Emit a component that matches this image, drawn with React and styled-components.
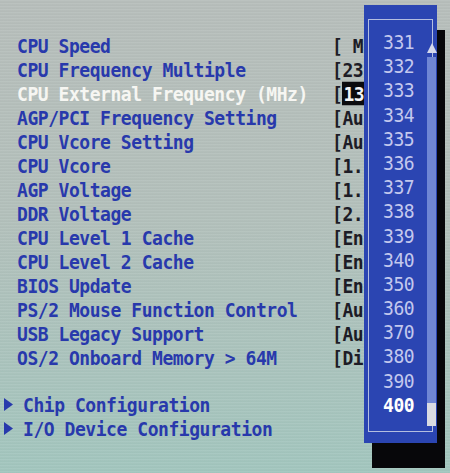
import React from "react"
import styled, { createGlobalStyle } from "styled-components"

const GlobalStyle = createGlobalStyle`
  html, body {
    margin: 0;
    padding: 0;
    background: #aec3bc;
  }
`

const Screen = styled.div`
  position: relative;
  width: 450px;
  height: 473px;
  overflow: hidden;
  background:
    repeating-linear-gradient(180deg, rgba(255,255,255,0.06) 0px, rgba(255,255,255,0.06) 1px, rgba(0,0,0,0.03) 2px, rgba(0,0,0,0) 3px),
    linear-gradient(180deg, #b7bebb 0%, #b3c0bb 45%, #a9c4bd 80%, #a2c6be 100%);
  font-family: "DejaVu Sans Mono", "Liberation Mono", monospace;
  font-weight: bold;
  font-size: 18px;
  letter-spacing: -0.45px;
`

const Menu = styled.div`
  display: flex;
  flex-direction: column;
  padding: 33px 0 0 17px;
`

const Row = styled.div`
  display: flex;
  align-items: center;
  height: 24px;
  white-space: nowrap;
`

const Label = styled.span`
  width: 315px;
  flex: none;
  color: ${(p) => (p.$active ? "#f6f6f2" : "#2839ac")};
  display: inline-block;
  transform: scaleY(1.12);
`

const Value = styled.span`
  color: #1d1c26;
  display: inline-block;
  transform: scaleY(1.12);
`

const Picked = styled.span`
  background: #0b0b0e;
  color: #f4f4f4;
  padding: 0 1px;
`

const Spacer = styled.div`
  height: 23px;
`

const SubRow = styled.div`
  display: flex;
  align-items: center;
  gap: 10px;
  height: 24px;
  margin-left: -13px;
  color: #2839ac;
  white-space: nowrap;

  span {
    display: inline-block;
    transform: scaleY(1.12);
  }
`

const Popup = styled.div`
  position: absolute;
  left: 364px;
  top: 5px;
  width: 73px;
  height: 438px;
  background: #2b45b2;
  box-shadow: 8px 25px 0 #07070a;
`

const Frame = styled.div`
  position: absolute;
  left: 4px;
  top: 14px;
  right: 4px;
  bottom: 11px;
  border: 1.5px solid #b4bee0;
`

const Numbers = styled.div`
  display: flex;
  flex-direction: column;
  padding: 25px 0 0 19px;
`

const Num = styled.div`
  height: 24.2px;
  line-height: 24.2px;
  font-weight: ${(p) => (p.$active ? "bold" : "normal")};
  color: ${(p) => (p.$active ? "#ffffff" : "#c3c8ee")};
  transform: scaleY(1.12);
`

const Scroll = styled.div`
  position: absolute;
  left: 63px;
  top: 33px;
  width: 9px;
  height: 388px;
  display: flex;
  flex-direction: column;
  align-items: center;
`

const Arrow = styled.div`
  width: 0;
  height: 0;
  border-left: 5px solid transparent;
  border-right: 5px solid transparent;
  border-bottom: 10px solid #d4d8ec;
  margin-top: 5px;
`

const Track = styled.div`
  flex: 1;
  width: 9px;
  margin-top: 4px;
  background-image: radial-gradient(circle, #6f86d4 0.8px, transparent 1px);
  background-size: 2px 2px;
  background-color: #2f4ab8;
  display: flex;
  flex-direction: column;
  justify-content: flex-end;
`

const Thumb = styled.div`
  height: 23px;
  background: #d9dbe2;
`

const Tri = () => (
  <svg width="9" height="13" viewBox="0 0 9 13">
    <polygon points="0,0 9,6.5 0,13" fill="#2839ac" />
  </svg>
)

const items = [
  ["CPU Speed", "[ M"],
  ["CPU Frequency Multiple", "[23"],
  ["CPU External Frequency (MHz)", "picked"],
  ["AGP/PCI Frequency Setting", "[Au"],
  ["CPU Vcore Setting", "[Au"],
  ["CPU Vcore", "[1."],
  ["AGP Voltage", "[1."],
  ["DDR Voltage", "[2."],
  ["CPU Level 1 Cache", "[En"],
  ["CPU Level 2 Cache", "[En"],
  ["BIOS Update", "[En"],
  ["PS/2 Mouse Function Control", "[Au"],
  ["USB Legacy Support", "[Au"],
  ["OS/2 Onboard Memory > 64M", "[Di"],
]

const numbers = ["331", "332", "333", "334", "335", "336", "337", "338", "339", "340", "350", "360", "370", "380", "390", "400"]

export default function App() {
  return (
    <Screen>
      <GlobalStyle />
      <Menu>
        {items.map(([label, value]) => (
          <Row key={label}>
            <Label $active={value === "picked"}>{label}</Label>
            <Value>
              {value === "picked" ? (
                <>
                  [<Picked>13</Picked>
                </>
              ) : (
                value
              )}
            </Value>
          </Row>
        ))}
        <Spacer />
        <SubRow>
          <Tri />
          <span>Chip Configuration</span>
        </SubRow>
        <SubRow>
          <Tri />
          <span>I/O Device Configuration</span>
        </SubRow>
      </Menu>

      <Popup>
        <Frame />
        <Numbers>
          {numbers.map((n) => (
            <Num key={n} $active={n === "400"}>{n}</Num>
          ))}
        </Numbers>
        <Scroll>
          <Arrow />
          <Track>
            <Thumb />
          </Track>
        </Scroll>
      </Popup>
    </Screen>
  )
}
